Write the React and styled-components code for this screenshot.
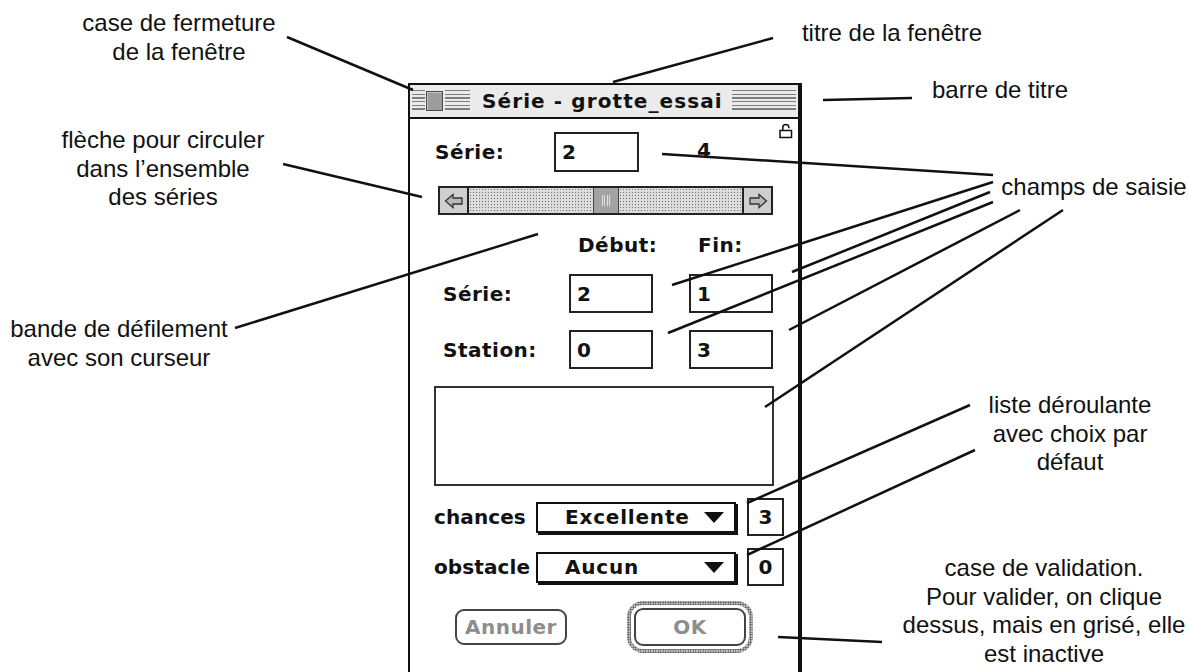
import styled, { createGlobalStyle } from "styled-components";

const GlobalStyle = createGlobalStyle`
  html, body { margin: 0; padding: 0; background: #fff; }
  body { font-family: "Liberation Sans", Arial, sans-serif; }
`;

const Stage = styled.div`
  position: relative;
  width: 1189px;
  height: 672px;
  overflow: hidden;
  box-sizing: border-box;
  padding: 83px 0 0 408px;
  background: #fff;
`;

// the classic mac window
const Window = styled.div`
  width: 394px;
  height: 589px;
  box-sizing: border-box;
  border-left: 2px solid #111;
  border-top: 2px solid #111;
  border-right: 4px solid #111;
  display: flex;
  flex-direction: column;
  font-family: "DejaVu Sans", sans-serif;
  font-weight: bold;
  color: #111;
`;

const TitleBar = styled.div`
  height: 32px;
  border-bottom: 2px solid #111;
  background: #ebebeb;
  display: flex;
  align-items: center;
  padding: 0 2px 0 2px;
`;

const Stripes = styled.div`
  height: 22px;
  width: ${(p) => (p.$w ? `${p.$w}px` : "auto")};
  flex: ${(p) => (p.$w ? "none" : "1")};
  background: repeating-linear-gradient(
    to bottom,
    #7d7d7d 0 1.3px,
    transparent 1.3px 3.7px
  );
`;

const CloseBox = styled.div`
  width: 17px;
  height: 20px;
  box-sizing: border-box;
  margin: 0 2px 0 1px;
  border: 1px solid #4a4a4a;
  background: #9c9c9c;
  box-shadow: inset 1px 1px 0 #c4c4c4;
`;

const Title = styled.div`
  font-size: 20px;
  letter-spacing: 1.1px;
  margin: 0 9px 0 12px;
  white-space: nowrap;
`;

const Body = styled.div`
  position: relative;
  flex: 1;
  background: #fff;
  padding: 13px 0 0 25px;
  display: flex;
  flex-direction: column;
`;

const Lock = styled.svg`
  position: absolute;
  right: 4px;
  top: 4px;
`;

const Row = styled.div`
  display: flex;
  align-items: center;
  margin-top: ${(p) => p.$mt || 0}px;
`;

const FieldLabel = styled.div`
  font-size: 20px;
  letter-spacing: 0.5px;
  width: ${(p) => (p.$w ? `${p.$w}px` : "auto")};
  white-space: nowrap;
`;

const Field = styled.div`
  box-sizing: border-box;
  width: ${(p) => p.$w}px;
  height: ${(p) => p.$h}px;
  border: 2px solid #222;
  background: #fff;
  font-size: 20px;
  display: flex;
  align-items: center;
  padding-left: ${(p) => (p.$center ? 0 : 6)}px;
  justify-content: ${(p) => (p.$center ? "center" : "flex-start")};
`;

const Count = styled.div`
  font-size: 20px;
  margin-left: 58px;
  margin-top: -4px;
`;

const ScrollBar = styled.div`
  box-sizing: border-box;
  width: 335px;
  height: 29px;
  margin: 14px 0 0 3px;
  border: 2px solid #222;
  display: flex;
`;

const ArrowBox = styled.div`
  width: 27px;
  background: #cfcfcf;
  display: flex;
  align-items: center;
  justify-content: center;
  border-${(p) => (p.$side === "left" ? "right" : "left")}: 2px solid #222;
`;

const Track = styled.div`
  flex: 1;
  display: flex;
  background-color: #dcdcdc;
  background-image: radial-gradient(#6e6e6e 0.8px, transparent 1px);
  background-size: 3px 3px;
`;

const Thumb = styled.div`
  margin-left: 124px;
  width: 26px;
  box-sizing: border-box;
  border-left: 1.5px solid #444;
  border-right: 1.5px solid #444;
  background: #a3a3a3;
  display: flex;
  align-items: center;
  justify-content: center;
  gap: 1.5px;
`;

const Grip = styled.span`
  width: 1px;
  height: 11px;
  background: #e0e0e0;
`;

const Grid = styled.div`
  display: grid;
  grid-template-columns: 126px 120px 84px;
  row-gap: 17px;
  align-items: center;
  margin: 19px 0 0 8px;
`;

const ColHead = styled.div`
  font-size: 20px;
  letter-spacing: 0.5px;
  padding-left: 9px;
  height: 22px;
  line-height: 22px;
  margin-bottom: 1px;
`;

const ListBox = styled.div`
  box-sizing: border-box;
  width: 340px;
  height: 100px;
  margin: 17px 0 0 -1px;
  border: 2px solid #333;
`;

const SmallLabel = styled.div`
  font-size: 20px;
  letter-spacing: 0.1px;
  width: 102px;
  margin-left: -1px;
`;

const Popup = styled.div`
  box-sizing: border-box;
  width: 200px;
  height: 31px;
  border: 2px solid #111;
  box-shadow: 2px 2px 0 #111;
  display: flex;
  align-items: center;
  padding: 0 10px 0 27px;
  font-size: 20px;
  letter-spacing: 0.8px;
  margin-right: 11px;
`;

const PopupText = styled.span`
  flex: 1;
`;

const Caret = styled.span`
  width: 0;
  height: 0;
  border-left: 10px solid transparent;
  border-right: 10px solid transparent;
  border-top: 11px solid #111;
`;

const ButtonRow = styled.div`
  display: flex;
  align-items: center;
  margin: 15px 0 0 20px;
`;

const Button = styled.div`
  box-sizing: border-box;
  width: ${(p) => p.$w}px;
  height: ${(p) => p.$h}px;
  border: 2px solid #444;
  border-radius: 9px;
  display: flex;
  align-items: center;
  justify-content: center;
  font-size: 20px;
  letter-spacing: 0.5px;
  color: #8d8d8d;
  background: #fff;
`;

const DefaultRing = styled.div`
  margin-left: 60px;
  padding: 4px;
  border-radius: 16px;
  background-color: #d0d0d0;
  background-image: radial-gradient(#555 0.8px, transparent 1px);
  background-size: 2.5px 2.5px;
`;

const RingGap = styled.div`
  padding: 3px;
  border-radius: 12px;
  background: #fff;
`;

// annotations, drawn on the free canvas around the window
const Note = styled.div`
  position: absolute;
  left: ${(p) => p.$cx}px;
  top: ${(p) => p.$top}px;
  transform: translateX(-50%);
  text-align: center;
  white-space: nowrap;
  font-family: "Liberation Sans", Arial, sans-serif;
  font-size: 24px;
  line-height: 28.5px;
  color: #111;
`;

const Leaders = styled.svg`
  position: absolute;
  left: 0;
  top: 0;
  pointer-events: none;
`;

const leaders = [
  [287, 37, 413, 90],
  [773, 38, 613, 82],
  [823, 100, 912, 98],
  [283, 164, 422, 197],
  [235, 328, 538, 234],
  [662, 154, 993, 175],
  [672, 285, 993, 182],
  [792, 272, 990, 192],
  [668, 333, 993, 202],
  [789, 330, 1020, 210],
  [765, 407, 1063, 210],
  [747, 503, 970, 405],
  [747, 555, 975, 450],
  [778, 637, 882, 642],
];

const notes = [
  { cx: 179, top: 9, lines: ["case de fermeture", "de la fenêtre"] },
  { cx: 892, top: 19, lines: ["titre de la fenêtre"] },
  { cx: 1000, top: 76, lines: ["barre de titre"] },
  { cx: 163, top: 126, lines: ["flèche pour circuler", "dans l’ensemble", "des séries"] },
  { cx: 119, top: 315, lines: ["bande de défilement", "avec son curseur"] },
  { cx: 1094, top: 173, lines: ["champs de saisie"] },
  { cx: 1070, top: 391, lines: ["liste déroulante", "avec choix par", "défaut"] },
  {
    cx: 1044,
    top: 554,
    lines: ["case de validation.", "Pour valider, on clique", "dessus, mais en grisé, elle", "est inactive"],
  },
];

const ArrowIcon = ({ dir }) => (
  <svg width="20" height="16" viewBox="0 0 20 16">
    <polygon
      points={dir === "left" ? "1.5,8 9,1.5 9,5 18,5 18,11 9,11 9,14.5" : "18.5,8 11,1.5 11,5 2,5 2,11 11,11 11,14.5"}
      fill="#b8b8b8"
      stroke="#333"
      strokeWidth="1.3"
    />
  </svg>
);

const popups = [
  { label: "chances", value: "Excellente", n: "3" },
  { label: "obstacle", value: "Aucun", n: "0" },
];

export default function App() {
  return (
    <>
      <GlobalStyle />
      <Stage>
        <Window>
          <TitleBar>
            <Stripes $w={13} />
            <CloseBox />
            <Stripes $w={25} />
            <Title>Série - grotte_essai</Title>
            <Stripes />
          </TitleBar>

          <Body>
            <Lock width="16" height="16" viewBox="0 0 16 16">
              <rect x="2" y="7.5" width="11.5" height="7" fill="#fff" stroke="#111" strokeWidth="1.5" />
              <path d="M4.8 7.5 V4.5 A3 3 0 0 1 10.8 4.5 V5.2" fill="none" stroke="#111" strokeWidth="1.5" />
            </Lock>

            <Row>
              <FieldLabel $w={119}>Série:</FieldLabel>
              <Field $w={85} $h={40}>2</Field>
              <Count>4</Count>
            </Row>

            <ScrollBar>
              <ArrowBox $side="left">
                <ArrowIcon dir="left" />
              </ArrowBox>
              <Track>
                <Thumb>
                  <Grip />
                  <Grip />
                  <Grip />
                  <Grip />
                </Thumb>
              </Track>
              <ArrowBox $side="right">
                <ArrowIcon dir="right" />
              </ArrowBox>
            </ScrollBar>

            <Grid>
              <span />
              <ColHead>Début:</ColHead>
              <ColHead>Fin:</ColHead>

              <FieldLabel>Série:</FieldLabel>
              <Field $w={84} $h={39}>2</Field>
              <Field $w={84} $h={39}>1</Field>

              <FieldLabel>Station:</FieldLabel>
              <Field $w={84} $h={39}>0</Field>
              <Field $w={84} $h={39}>3</Field>
            </Grid>

            <ListBox />

            {popups.map((p) => (
              <Row key={p.label} $mt={12}>
                <SmallLabel>{p.label}</SmallLabel>
                <Popup>
                  <PopupText>{p.value}</PopupText>
                  <Caret />
                </Popup>
                <Field $w={37} $h={38} $center>
                  {p.n}
                </Field>
              </Row>
            ))}

            <ButtonRow>
              <Button $w={112} $h={36}>Annuler</Button>
              <DefaultRing>
                <RingGap>
                  <Button $w={112} $h={38}>OK</Button>
                </RingGap>
              </DefaultRing>
            </ButtonRow>
          </Body>
        </Window>

        <Leaders width="1189" height="672" viewBox="0 0 1189 672">
          {leaders.map(([x1, y1, x2, y2], i) => (
            <line key={i} x1={x1} y1={y1} x2={x2} y2={y2} stroke="#111" strokeWidth="2.5" />
          ))}
        </Leaders>

        {notes.map((n, i) => (
          <Note key={i} $cx={n.cx} $top={n.top}>
            {n.lines.map((l, j) => (
              <div key={j}>{l}</div>
            ))}
          </Note>
        ))}
      </Stage>
    </>
  );
}
